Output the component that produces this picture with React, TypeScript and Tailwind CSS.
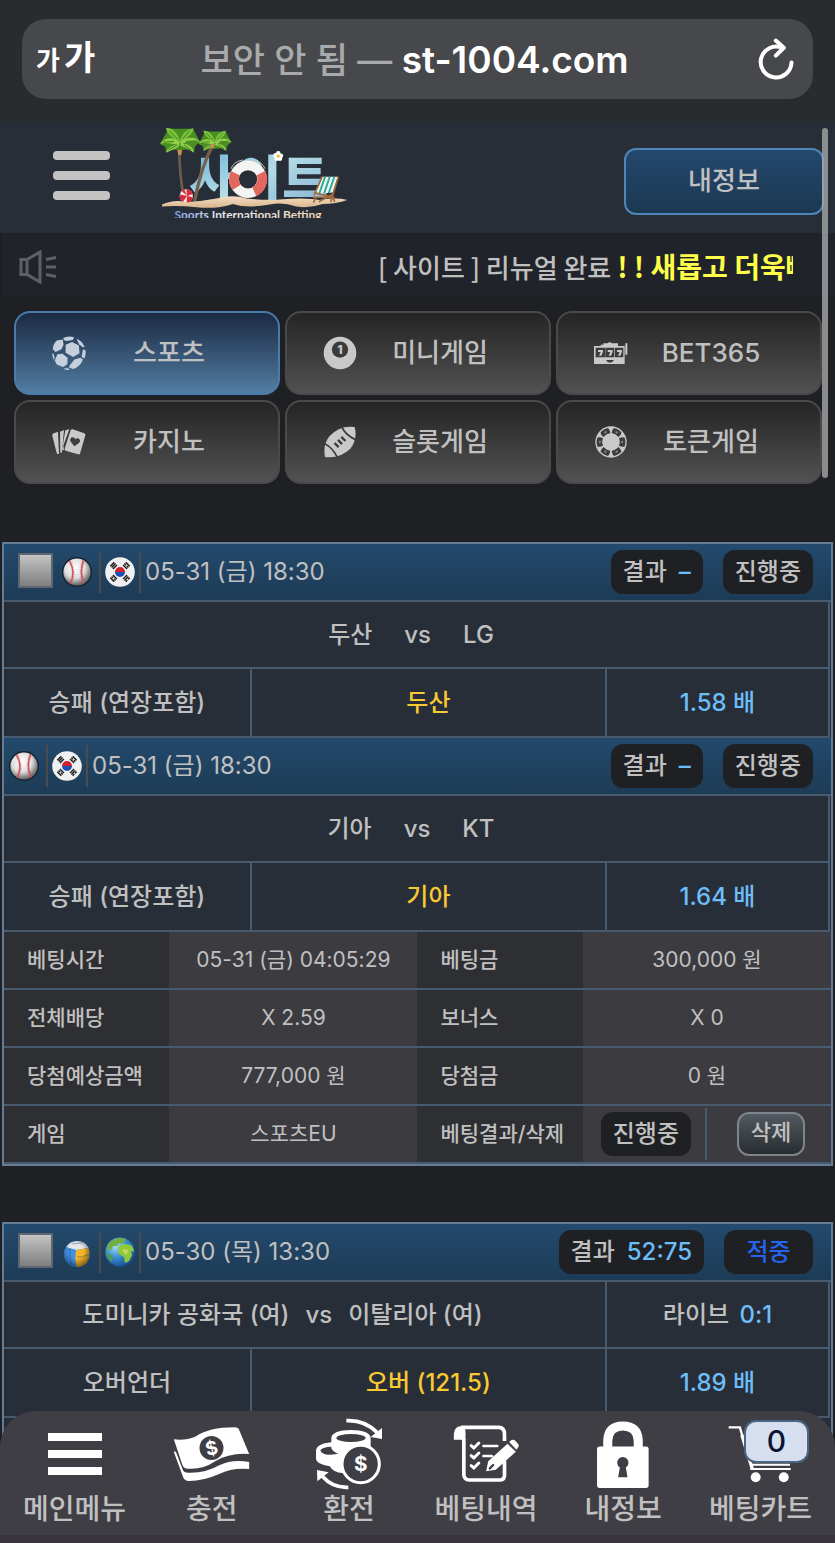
import type { ReactNode } from "react";

const FONT = "font-[Inter,'Noto_Sans_CJK_KR',sans-serif]";

/* ---------- header drawings ---------- */

function ReloadIcon() {
  return (
    <svg viewBox="0 0 36 42" className="h-[42px] w-9" fill="none" stroke="#fff" strokeWidth="4" strokeLinecap="round" strokeLinejoin="round">
      <path d="M33.500 24.5A15.4 15.4 0 1 1 24 9.8" />
      <path d="M17.8 2.6 L25.800 9.8 L17.8 17.6" />
    </svg>
  );
}

function Palm({ x, y, s }: { x: number; y: number; s: number }) {
  return (
    <g transform={`translate(${x} ${y}) scale(${s})`}>
      <path d="M-34-32L40-32L52-8L60 8L46 20L42 38L22 30L0 32L-24 30L-42 38L-44 22L-60 14L-48-8Z" fill="#4a8f22" />
      <path d="M0 4C-10-26-26-36-42-34C-40-20-26-6 0 6C4-14 16-30 40-34C42-22 24-4 0 8" fill="#7cc43c" />
      <path d="M0 8C-18-8-42-8-60 12C-40 8-22 12-6 16C-24 18-38 26-42 40C-22 32-8 24 0 18C16 22 30 30 42 40C42 26 28 14 8 12C26 4 46 4 62 8C46-10 22-10 0 8" fill="#93d04a" />
      <path d="M-50 8L-18 6M-34 32L-8 16M34 32L12 16M52 4L18 6M-32-26L-6 0M30-26L8-2M0 10L0 26" stroke="#3c7f1a" strokeWidth="3" />
    </g>
  );
}

function SiteLogo() {
  return (
    <svg viewBox="480 384 566 270" className="h-[90px] w-[188px]" role="img" aria-label="사이트">
      <defs>
        <linearGradient id="ice" x1="0" y1="0" x2="1" y2="1">
          <stop offset="0" stopColor="#5aa7d2" />
          <stop offset=".5" stopColor="#b4dbe6" />
          <stop offset="1" stopColor="#7fb0d2" />
        </linearGradient>
        <linearGradient id="sand" x1="0" y1="0" x2="0" y2="1">
          <stop offset="0" stopColor="#f5dfc4" />
          <stop offset="1" stopColor="#d9b58c" />
        </linearGradient>
        <linearGradient id="tag" x1="0" y1="0" x2="1" y2="0">
          <stop offset="0" stopColor="#7d9be8" />
          <stop offset=".3" stopColor="#e6e8f2" />
          <stop offset="1" stopColor="#f2d3ae" />
        </linearGradient>
      </defs>
      <path d="M538 460Q540 530 551 590" stroke="#6d5c4d" strokeWidth="8" fill="none" />
      <text x="568 707 848" y="590" fontFamily="'Noto Sans CJK KR', sans-serif" fontWeight="900" fontSize="150" fill="url(#ice)">사이트</text>
      <path d="M638 436Q604 500 584 604" stroke="#75604c" strokeWidth="10" fill="none" />
      <Palm x={540} y={418} s={1} />
      <Palm x={645} y={420} s={0.82} />
      <path d="M532 450h15l-3 15h-9zM632 432h14l-4 12h-8z" fill="#c98a55" />
      <circle cx="745" cy="538" r="30" fill="#272e37" />
      <circle cx="745" cy="538" r="42" fill="none" stroke="#f4f4f2" strokeWidth="29" />
      <path d="M694 513A57 57 0 0 0 698 570L723 554A28 28 0 0 1 720 526Z" fill="#e4675e" />
      <path d="M797 513A57 57 0 0 1 770 589L758 562A28 28 0 0 0 771 526Z" fill="#e4675e" />
      <path d="M694 506Q702 484 730 480M796 506Q788 484 760 480" stroke="#c9c4bd" strokeWidth="3" fill="none" />
      <path d="M486 614Q520 598 562 606Q610 604 650 596Q700 582 740 596Q800 602 850 598Q920 592 960 600Q1010 592 1044 600Q1010 612 970 612Q930 626 890 620Q850 606 810 614Q740 626 700 612Q650 628 590 622Q530 616 486 620Z" fill="url(#sand)" />
      <circle cx="559" cy="588" r="20" fill="#f1ece8" />
      <path d="M559 568A20 20 0 0 1 578 582L562 588ZM579 592A20 20 0 0 1 560 608L562 588ZM548 606A20 20 0 0 1 540 584L562 588ZM545 573A20 20 0 0 1 553 569L562 588Z" fill="#d92a3c" />
      <g fill="#fff">
        <circle cx="836" cy="460" r="7" /><circle cx="844" cy="467" r="7" /><circle cx="841" cy="476" r="7" />
        <circle cx="831" cy="476" r="7" /><circle cx="828" cy="466" r="7" />
      </g>
      <circle cx="836" cy="468" r="5" fill="#f0b429" />
      <path d="M968 530L1016 530L1000 578L944 584Z" fill="#e9f5ee" />
      <path d="M974 530h6l-18 52h-6zM988 530h6l-17 51h-6zM1002 530h6l-17 49h-6z" fill="#2fa89a" />
      <path d="M968 530L944 586M1017 530L994 606M944 578L1006 594M950 590L942 608M958 606L1004 580M996 582L1006 606M940 592H1000" stroke="#a2683a" strokeWidth="5" fill="none" />
      <text x="524" y="658" fontFamily="Lato, sans-serif" fontWeight="700" fontSize="36" fill="url(#tag)">Sports International Betting</text>
    </svg>
  );
}

function SpeakerIcon() {
  return (
    <svg viewBox="0 0 38 34" className="h-[34px] w-[38px]" fill="none" stroke="#5d6165" strokeWidth="3">
      <path d="M2 9.5H8L21 2V32L8 24.5H2Z" />
      <path d="M8 9V25" />
      <path d="M27 9.5L37 7.5M27 17H37M27 24.5L37 26.5" />
    </svg>
  );
}

/* ---------- category icons ---------- */

function SoccerIcon() {
  return (
    <svg viewBox="0 0 100 100" className="size-[34px]" fill="#c5d0dc">
      <path d="M40 26L59 18L79 28L81 51L62 62L40 49Z" />
      <path d="M14 13L32 10L34 26L28 39L10 47L2 38Q4 22 14 13Z" />
      <path d="M16 54L31 52L46 64L45 83L32 91L14 84L8 72Z" />
      <path d="M66 69L84 64L91 69Q84 90 62 97L50 93L53 85Z" />
      <path d="M33 6Q48-2 65 4L61 12L42 15L35 12Z" />
      <path d="M72 8Q88 14 96 32L91 33L80 25Z" />
      <path d="M91 40L98 41Q101 55 95 66L87 61Z" />
      <path d="M1 50L5 54L8 66L5 70Q0 60 1 50ZM37 95L46 95L52 98L50 100Q42 100 36 98Z" />
    </svg>
  );
}

function PoolBallIcon() {
  return (
    <svg viewBox="0 0 100 100" className="size-[34px]">
      <circle cx="50" cy="50" r="48" fill="#c9c9c9" />
      <circle cx="50" cy="40" r="24" fill="#3b3b3b" />
      <text x="50" y="53" textAnchor="middle" fontFamily="Inter, sans-serif" fontWeight="800" fontSize="36" fill="#c9c9c9">1</text>
    </svg>
  );
}

function SlotIcon() {
  return (
    <svg viewBox="0 0 102 66" className="h-[22px] w-[34px]">
      <path d="M28 4H40Q47-3 54 4H72V12H92V66H0V12H20V8H28ZM94 14V4H100V38H94Z" fill="#c9c9c9" />
      <path d="M5 17H34V46H5ZM35 17H61V46H35ZM63 17H88V46H63ZM36 54H60Q56 62 48 62T36 54Z" fill="#3c3c3c" />
      <path d="M12 24H27V29L22 41H15L20 30H12ZM41 24H56V29L51 41H44L49 30H41ZM69 24H84V29L79 41H72L77 30H69Z" fill="#c9c9c9" />
    </svg>
  );
}

function CardsIcon() {
  return (
    <svg viewBox="0 0 102 78" className="h-[26px] w-[34px]">
      <path d="M2 14L18 8L21 74Q16 76 14 72L1 20ZM24 8L36 3L30 70L25 72Z" fill="#c9c9c9" />
      <path d="M40 4L52 1L34 50L36 64L30 62Z" fill="#c9c9c9" />
      <path d="M56 3Q58 0 62 1L97 13Q101 15 100 19L84 74Q82 77 78 76L41 65Q37 64 38 59Z" fill="#c9c9c9" />
      <path d="M67 52L55 37Q53 26 62 25Q68 25 70 31Q76 25 82 30Q87 37 80 43Z" fill="#3c3c3c" />
    </svg>
  );
}

function FootballIcon() {
  return (
    <svg viewBox="0 0 94 94" className="h-[32px] w-[32px]">
      <path d="M3 91Q-4 54 16 30Q46-3 90 3Q99 38 78 66Q46 97 3 91Z" fill="#c9c9c9" />
      <path d="M2 52Q24 62 40 93M52 2Q62 26 92 40" stroke="#3c3c3c" strokeWidth="5" fill="none" />
      <path d="M31 50L43 62M41 41L53 53M51 32L63 44" stroke="#3c3c3c" strokeWidth="7" />
    </svg>
  );
}

function ChipIcon() {
  return (
    <svg viewBox="0 0 100 100" className="size-[32px]">
      <circle cx="50" cy="50" r="49" fill="#c9c9c9" />
      {[0, 60, 120, 180, 240, 300].map((a) => (
        <g key={a} transform={`rotate(${a} 50 50)`}>
          <path d="M7 37Q13 33 25 38Q21 50 25 62Q13 67 7 63Q3 50 7 37Z" fill="#3c3c3c" />
          <path d="M15 45L19 50L15 55L11 50Z" fill="#8a8a8a" />
        </g>
      ))}
      <circle cx="50" cy="50" r="27" fill="#c9c9c9" />
    </svg>
  );
}

/* ---------- match icons ---------- */

function BaseballIcon() {
  return (
    <svg viewBox="0 0 34 32" className="h-8 w-[34px]">
      <defs>
        <radialGradient id="ball" cx=".42" cy=".35" r=".62">
          <stop offset="0" stopColor="#fff" />
          <stop offset=".6" stopColor="#dedede" />
          <stop offset="1" stopColor="#6d6d6d" />
        </radialGradient>
      </defs>
      <circle cx="16" cy="16" r="15" fill="#16222e" />
      <circle cx="16" cy="16" r="13.6" fill="url(#ball)" />
      <path d="M8.500 4.800Q15 16 9.4 27.500M22.500 4.500Q18 16 22.800 27.200" stroke="#d0545c" strokeWidth="1.6" fill="none" />
      <path d="M8.500 4.800Q15 16 9.4 27.500M22.500 4.500Q18 16 22.800 27.200" stroke="#d0545c" strokeWidth="3.6" strokeDasharray=".7 1.6" fill="none" opacity=".5" />
    </svg>
  );
}

function KoreaIcon() {
  return (
    <svg viewBox="0 0 30 30" className="size-[30px]">
      <circle cx="15" cy="15" r="14.8" fill="#f0f0f0" />
      <path d="M10 15A5 5 0 0 1 20 15Z" fill="#d4202f" />
      <path d="M10 15A5 5 0 0 0 20 15Z" fill="#1d50b5" />
      <g stroke="#1b1b1b" strokeWidth="1.4">
        <path d="M5.3 9.3L9.3 5.3M6.6 10.6L10.6 6.6M7.9 11.9L11.9 7.9" />
        <path d="M20.7 5.3L24.7 9.3M19.4 6.6L21 8.2M21.8 9L23.4 10.6M18.1 7.9L22.1 11.9" />
        <path d="M5.3 20.7L9.3 24.7M6.6 19.4L8.2 21M9 21.8L10.6 23.4M7.9 18.1L11.9 22.1" />
        <path d="M20.7 24.7L22.3 23.1M23.1 22.3L24.7 20.7M19.4 23.4L23.4 19.4M18.1 22.1L22.1 18.1" />
      </g>
    </svg>
  );
}

function VolleyballIcon() {
  return (
    <svg viewBox="0 0 34 32" className="h-8 w-[34px]">
      <defs>
        <radialGradient id="shade" cx=".45" cy=".4" r=".6">
          <stop offset=".5" stopColor="#000" stopOpacity="0" />
          <stop offset="1" stopColor="#000" stopOpacity=".45" />
        </radialGradient>
      </defs>
      <circle cx="16" cy="18" r="13" fill="#3a86d8" />
      <path d="M5 11Q9 5 16 5Q24 5 27.500 12L15 14Z" fill="#e4e6ee" />
      <path d="M15 14L27.500 12Q30 20 25.500 27Q21 31 15.500 31Q13 22 15 14Z" fill="#f4b52a" />
      <path d="M5 11Q10 14 15 14Q13 22 15.500 31Q7 30 4 23Q1.800 16 5 11Z" fill="#3f8fe0" />
      <path d="M16 21Q23 21 28.500 18M9 13Q8 21 11 29M11 8L22 7" stroke="#1b3c66" strokeOpacity=".35" strokeWidth="1.2" fill="none" />
      <circle cx="16" cy="18" r="13" fill="url(#shade)" />
    </svg>
  );
}

function GlobeIcon() {
  return (
    <svg viewBox="0 0 30 30" className="size-[30px]">
      <defs>
        <radialGradient id="sea" cx=".35" cy=".3" r=".75">
          <stop offset="0" stopColor="#a8dcf2" />
          <stop offset=".5" stopColor="#3d8fd0" />
          <stop offset="1" stopColor="#164c93" />
        </radialGradient>
      </defs>
      <circle cx="15" cy="15" r="14.600" fill="url(#sea)" />
      <path d="M5 5Q10 1 16 1L21 2L19 6L14 6L12 9L8 9L6 13L2 13Q2 9 5 5Z" fill="#6fae3f" />
      <path d="M13 11L15 8L20 7L26 8Q29 11 29 15L26 14L27 18L24 24L20 26L19 20L14 17Z" fill="#8fca3a" />
      <path d="M1 16L5 17L8 21L6 25Q2 21 1 16Z" fill="#4f9a58" />
      <path d="M17 12L23 13L22 18L19 16Z" fill="#c0dc63" />
    </svg>
  );
}

/* ---------- bottom bar icons ---------- */

function BarsIcon() {
  return (
    <svg viewBox="0 0 54 42" className="h-[42px] w-[54px]" fill="#fff">
      <path d="M0 0H54V8H0ZM0 17H54V25H0ZM0 34H54V42H0Z" />
    </svg>
  );
}

function MoneyIcon() {
  return (
    <svg viewBox="522 646 230 168" className="h-14 w-[77px]">
      <path d="M524 686Q560 690 588 678Q630 650 706 650Q718 650 720 658L750 730Q690 726 648 752Q610 778 564 774Q554 774 550 764Z" fill="#fff" />
      <path d="M524 724Q528 718 532 728L552 780Q556 786 566 786Q620 788 660 764Q700 744 750 754V775Q700 770 660 790Q610 812 566 811Q556 810 552 800Z" fill="#fff" />
      <circle cx="637" cy="712" r="36" fill="#403e45" />
      <text x="637" y="732" textAnchor="middle" fontFamily="Inter, sans-serif" fontWeight="700" fontSize="56" fill="#fff" transform="rotate(-14 637 712)">$</text>
    </svg>
  );
}

function ExchangeIcon() {
  return (
    <svg viewBox="946 625 204 216" className="h-[72px] w-[68px]">
      <path d="M949 722Q952 702 995 698V684Q998 662 1054 661Q1110 662 1113 684V714Q1060 730 1034 772L1032 790Q1004 792 990 770Q950 764 949 748Z" fill="#fff" />
      <ellipse cx="1054" cy="685" rx="44" ry="12" fill="#403e45" />
      <path d="M962 722Q970 711 995 711V716Q1000 728 1016 732Q968 742 962 722Z" fill="#403e45" />
      <circle cx="1083" cy="763" r="56" fill="#403e45" stroke="#fff" strokeWidth="9" />
      <text x="1083" y="785" textAnchor="middle" fontFamily="Inter, sans-serif" fontWeight="700" fontSize="62" fill="#fff">$</text>
      <path d="M1040 633Q1094 630 1132 668" stroke="#fff" strokeWidth="11" fill="none" />
      <path d="M1147 655V688L1113 682Z" fill="#fff" />
      <path d="M1046 833Q1000 836 968 800" stroke="#fff" strokeWidth="11" fill="none" />
      <path d="M952 781L987 788L953 815Z" fill="#fff" />
    </svg>
  );
}

function HistoryIcon() {
  return (
    <svg viewBox="112 648 200 174" className="h-[58px] w-[67px]" fill="none" stroke="#fff">
      <path d="M136 655H250Q266 656 266 676V696M266 756V800Q264 813 252 813H160Q146 812 144 798V690" strokeWidth="11" />
      <path d="M114 692V674Q116 652 138 651Q150 656 149 672V692Z" fill="#fff" stroke="none" />
      <path d="M166 710L174 717L189 702M166 740L174 747L189 732M166 770L174 777L189 762" strokeWidth="9" strokeLinecap="round" />
      <path d="M203 711H244M203 741H228" strokeWidth="8" strokeLinecap="round" />
      <path d="M275 704L300 728L240 782L211 787L217 757ZM280 699L287 693Q293 690 299 696L307 705Q311 711 306 716L302 722Z" fill="#fff" stroke="none" />
      <path d="M222 778L232 768" stroke="#403e45" strokeWidth="7" strokeLinecap="round" />
    </svg>
  );
}

function LockIcon() {
  return (
    <svg viewBox="551 630 155 200" className="h-[67px] w-[52px]">
      <path d="M583 712V688Q585 645 628 645Q672 645 674 688V712" fill="none" stroke="#fff" strokeWidth="27" />
      <rect x="551" y="706" width="154" height="124" rx="8" fill="#fff" />
      <path d="M619 769A17 17 0 1 1 637 769L642 798H614Z" fill="#403e45" />
    </svg>
  );
}

function CartIcon() {
  return (
    <svg viewBox="928 646 194 178" className="h-[59px] w-[64px]" fill="none" stroke="#fff">
      <path d="M930 653H964L972 680" strokeWidth="7" />
      <path d="M970 676L1002 780" strokeWidth="10" />
      <path d="M980 676H1120L1108 744L996 752" strokeWidth="6" />
      <path d="M996 766H1116M996 779H1118" strokeWidth="6" />
      <path d="M1000 680L1010 750M1030 680L1034 750M1060 680V750M1090 680L1084 750" strokeWidth="5" />
      <circle cx="1012" cy="804" r="15" fill="#fff" stroke="none" />
      <circle cx="1097" cy="804" r="15" fill="#fff" stroke="none" />
    </svg>
  );
}

/* ---------- building blocks ---------- */

const categories = [
  { label: "스포츠", icon: <SoccerIcon />, active: true },
  { label: "미니게임", icon: <PoolBallIcon /> },
  { label: "BET365", icon: <SlotIcon /> },
  { label: "카지노", icon: <CardsIcon /> },
  { label: "슬롯게임", icon: <FootballIcon /> },
  { label: "토큰게임", icon: <ChipIcon /> },
];

const navItems = [
  { label: "메인메뉴", icon: <BarsIcon /> },
  { label: "충전", icon: <MoneyIcon /> },
  { label: "환전", icon: <ExchangeIcon /> },
  { label: "베팅내역", icon: <HistoryIcon /> },
  { label: "내정보", icon: <LockIcon /> },
  { label: "베팅카트", icon: <CartIcon />, count: 0 },
];

function Pill({ children }: { children: ReactNode }) {
  return (
    <span className="flex h-11 min-w-[89px] items-center justify-center gap-3 rounded-xl bg-[#1e2024] px-3 whitespace-nowrap">
      {children}
    </span>
  );
}

type MatchProps = {
  selectable?: boolean;
  sport: ReactNode;
  country: ReactNode;
  date: string;
  result: string;
  status: ReactNode;
  teams: ReactNode;
  live?: ReactNode;
  market: string;
  pick: string;
  odds: string;
};

const cell = "border-r-2 border-b-2 border-[#475a6e] p-0 text-center font-medium";

function Match({ selectable, sport, country, date, result, status, teams, live, market, pick, odds }: MatchProps) {
  return (
    <>
      <div className={`flex h-[58px] items-center border-b-2 border-[#475a6e] bg-linear-to-b from-[#234a6d] to-[#1d3b55] pr-[18px] ${selectable ? "pl-[14px]" : "pl-1"}`}>
        {selectable && (
          <input type="checkbox" aria-label={`${date} 선택`} className="mr-2 mb-1 size-[35px] appearance-none border-2 border-[#5e6670] bg-linear-to-b from-[#c4c4c4] to-[#7f7f7f]" />
        )}
        {sport}
        <span className="mx-1 h-[42px] w-0.5 bg-[#4c4b4a]" />
        {country}
        <span className="mx-1 h-[42px] w-0.5 bg-[#4c4b4a]" />
        <span className="font-normal whitespace-nowrap">{date}</span>
        <span className="ml-auto flex gap-5">
          <Pill>
            결과 <span className="text-[#6dbdf8]">{result}</span>
          </Pill>
          <Pill>{status}</Pill>
        </span>
      </div>
      <table className="w-full table-fixed border-separate border-spacing-0 pr-px">
        <colgroup>
          <col className="w-[30%]" />
          <col className="w-[43%]" />
          <col className="w-[27%]" />
        </colgroup>
        <tbody>
          <tr className="h-[67px]">
            <td colSpan={live ? 2 : 3} className={cell}>{teams}</td>
            {live && <td className={cell}>{live}</td>}
          </tr>
          <tr className="h-[69px]">
            <th scope="row" className={cell}>{market}</th>
            <td className={`${cell} text-[#f9c932]`}>{pick}</td>
            <td className={`${cell} text-[#6dbdf8]`}>{odds}</td>
          </tr>
        </tbody>
      </table>
    </>
  );
}

const details = [
  ["베팅시간", "05-31 (금) 04:05:29", "베팅금", "300,000 원"],
  ["전체배당", "X 2.59", "보너스", "X 0"],
  ["당첨예상금액", "777,000 원", "당첨금", "0 원"],
];

const detailHead = "border-b-2 border-[#475a6e] bg-[#2e2f32] p-0 pl-[23px] text-left font-medium whitespace-nowrap";
const detailCell = "border-b-2 border-[#475a6e] bg-[#3b3b40] p-0 text-center font-normal whitespace-nowrap";

function BetDetails() {
  return (
    <table className="w-full table-fixed border-separate border-spacing-0 text-[21px] leading-7">
      <colgroup>
        <col className="w-1/5" />
        <col className="w-[30%]" />
        <col className="w-1/5" />
        <col className="w-[30%]" />
      </colgroup>
      <tbody>
        {details.map(([a, b, c, d]) => (
          <tr key={a} className="h-[58px]">
            <th scope="row" className={detailHead}>{a}</th>
            <td className={detailCell}>{b}</td>
            <th scope="row" className={detailHead}>{c}</th>
            <td className={detailCell}>{d}</td>
          </tr>
        ))}
        <tr className="h-[58px]">
          <th scope="row" className={detailHead}>게임</th>
          <td className={detailCell}>스포츠EU</td>
          <th scope="row" className={detailHead}>베팅결과/삭제</th>
          <td className={detailCell}>
            <div className="flex h-[52px] items-center text-2xl font-medium">
              <div className="flex h-full w-1/2 items-center justify-center border-r-2 border-[#475a6e] pl-1">
                <Pill>진행중</Pill>
              </div>
              <div className="flex flex-1 justify-center pl-1">
                <button type="button" className="h-11 rounded-xl border-2 border-[#7f858a] bg-linear-to-b from-[#525a62] to-[#282d30] px-3 pb-1 text-[22px] leading-8">
                  삭제
                </button>
              </div>
            </div>
          </td>
        </tr>
      </tbody>
    </table>
  );
}

function Teams({ home, away, wide }: { home: string; away: string; wide?: boolean }) {
  return (
    <div className={`flex justify-center ${wide ? "gap-8 pr-2.5" : "gap-4 pr-11"}`}>
      <span>{home}</span>
      <span>vs</span>
      <span>{away}</span>
    </div>
  );
}

export default function App() {
  return (
    <div className={`relative flex h-screen flex-col overflow-hidden bg-[#1e2024] font-medium text-[#c0c0c0] ${FONT}`}>
      <div className="shrink-0 bg-[#2a2b2d] px-[22px] pt-[19px] pb-[23px]">
        <div className="flex h-20 items-center rounded-3xl bg-[#47484b] pr-[19px] pl-[14px] text-white">
          <button type="button" aria-label="가가" className="flex items-baseline gap-1 font-bold leading-10">
            <span className="text-[26px]">가</span>
            <span className="text-[34px]">가</span>
          </button>
          <div className="flex-1 pt-0.5 pr-6 text-center text-[37px] leading-[48px] whitespace-nowrap">
            <span className="text-[35px] text-[#a9aaac]">보안 안 됨 — </span>
            <span className="font-semibold">st-1004.com</span>
          </div>
          <button type="button" aria-label="새로고침">
            <ReloadIcon />
          </button>
        </div>
      </div>

      <div className="relative min-h-0 flex-1 overflow-hidden">
        <header className="flex h-[111px] items-center bg-[#272e37] pr-[11px] pl-[53px]">
          <button type="button" aria-label="메뉴" className="mb-1 flex w-[57px] flex-col gap-[11px]">
            <span className="h-[9px] rounded-sm bg-[#c3c3c3]" />
            <span className="h-[9px] rounded-sm bg-[#c3c3c3]" />
            <span className="h-[9px] rounded-sm bg-[#c3c3c3]" />
          </button>
          <a href="#home" className="mb-2.5 ml-[50px] h-[90px]">
            <SiteLogo />
          </a>
          <button type="button" className="mt-2 ml-auto h-[67px] w-[200px] rounded-xl border-2 border-[#4f86b8] bg-linear-to-b from-[#24486f] to-[#1c3850] pb-0.5 text-[26px] leading-9">
            내정보
          </button>
        </header>

        <div className="ml-0.5 flex h-[63px] items-center bg-[#20242a] pt-1 pr-[42px] pl-[17px]">
          <SpeakerIcon />
          <p className="flex-1 overflow-hidden pl-[321px] font-['Noto_Sans_CJK_KR',sans-serif] text-[26px] leading-10 whitespace-nowrap">
            [ 사이트 ] 리뉴얼 완료 <span className="text-[28px] font-bold text-[#ffff4a]">! ! 새롭고 더욱빠</span>
          </p>
        </div>

        <div className="grid grid-cols-3 gap-[5px] pt-[15px] pr-[13px] pl-[14px]">
          {categories.map((c) => (
            <button
              key={c.label}
              type="button"
              className={`flex h-[84px] items-center rounded-2xl border-2 bg-linear-to-b pr-[26px] pl-9 text-[26px] leading-9 ${
                c.active ? "border-[#4a7cab] from-[#1c2b44] to-[#527ea3]" : "border-[#4a4a4a] from-[#252525] to-[#525252]"
              }`}
            >
              <span className="flex w-[34px] justify-center">{c.icon}</span>
              <span className="flex-1">{c.label}</span>
            </button>
          ))}
        </div>

        <main className="mt-[58px] flex flex-col gap-14 px-0.5 text-2xl leading-9">
          <section className="border-2 border-[#647c95] bg-[#272e37]">
            <Match
              selectable
              sport={<BaseballIcon />}
              country={<KoreaIcon />}
              date="05-31 (금) 18:30"
              result="–"
              status="진행중"
              teams={<Teams home="두산" away="LG" wide />}
              market="승패 (연장포함)"
              pick="두산"
              odds="1.58 배"
            />
            <Match
              sport={<BaseballIcon />}
              country={<KoreaIcon />}
              date="05-31 (금) 18:30"
              result="–"
              status="진행중"
              teams={<Teams home="기아" away="KT" wide />}
              market="승패 (연장포함)"
              pick="기아"
              odds="1.64 배"
            />
            <BetDetails />
          </section>

          <section className="border-2 border-[#647c95] bg-[#272e37] pb-40">
            <Match
              selectable
              sport={<VolleyballIcon />}
              country={<GlobeIcon />}
              date="05-30 (목) 13:30"
              result="52:75"
              status={<span className="text-[#2563f0]">적중</span>}
              teams={<Teams home="도미니카 공화국 (여)" away="이탈리아 (여)" />}
              live={
                <>
                  라이브 <span className="ml-1 text-[#6dbdf8]">0:1</span>
                </>
              }
              market="오버언더"
              pick="오버 (121.5)"
              odds="1.89 배"
            />
          </section>
        </main>

        <div className="absolute top-1.5 right-[7px] h-[350px] w-1.5 rounded-full bg-[#a5a6a8]/80" />
      </div>

      <nav className="absolute inset-x-0 bottom-0 grid grid-cols-6 rounded-t-[36px] border-b-8 border-[#37353b] bg-[#403e45] px-1.5 pt-[7px] pb-[7px]">
        {navItems.map((n) => (
          <a key={n.label} href={`#${n.label}`} className="relative flex flex-col items-center text-[28px] leading-[38px] whitespace-nowrap">
            <span className="flex h-[72px] items-center">{n.icon}</span>
            {n.label}
            {n.count !== undefined && (
              <span className="absolute top-[2px] right-5 flex h-[43px] w-[65px] items-center justify-center rounded-xl border-2 border-[#4a6483] bg-[#d5dff0] pb-0.5 text-[30px] font-medium text-[#0c1330]">
                {n.count}
              </span>
            )}
          </a>
        ))}
      </nav>
    </div>
  );
}
